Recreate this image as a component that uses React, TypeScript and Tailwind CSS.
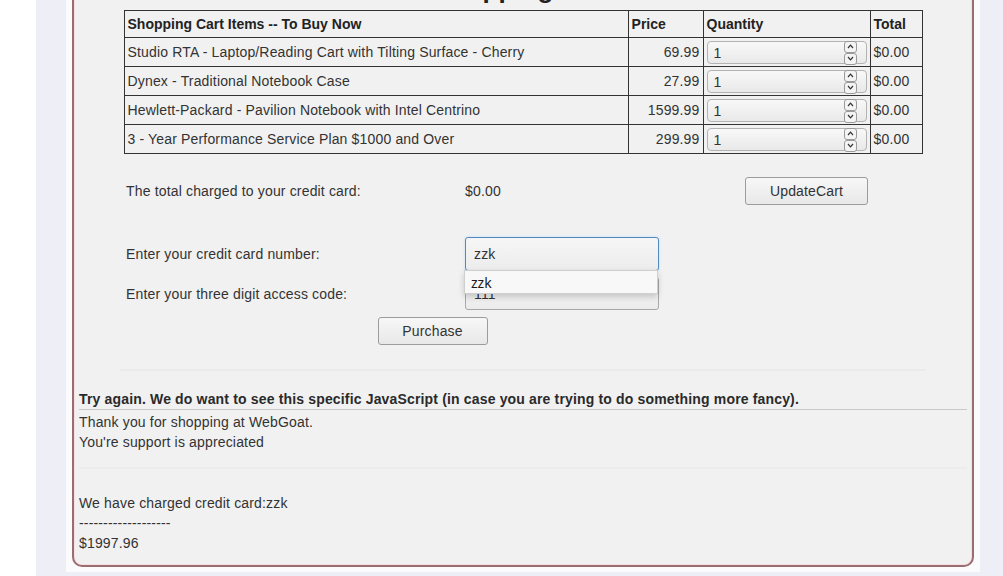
import React from 'react';

interface CartItem {
  name: string;
  price: string;
  qty: string;
  total: string;
}

const items: CartItem[] = [
  { name: 'Studio RTA - Laptop/Reading Cart with Tilting Surface - Cherry', price: '69.99', qty: '1', total: '$0.00' },
  { name: 'Dynex - Traditional Notebook Case', price: '27.99', qty: '1', total: '$0.00' },
  { name: 'Hewlett-Packard - Pavilion Notebook with Intel Centrino', price: '1599.99', qty: '1', total: '$0.00' },
  { name: '3 - Year Performance Service Plan $1000 and Over', price: '299.99', qty: '1', total: '$0.00' },
];

// spinner of a number field, drawn by hand
function QtyInput({ value }: { value: string }) {
  return (
    <div className="relative h-[23px] w-[160px] rounded-[4px] border border-[#b3b3b3] bg-gradient-to-b from-[#f8f8f8] to-[#e9e9e9] pl-[6px] leading-[22px]">
      {value}
      <div className="absolute right-[9px] top-[-1px] flex flex-col">
        <div className="flex h-[12px] w-[13px] items-center justify-center rounded-[3px] border border-[#9a9a9a] bg-[#f4f4f4]">
          <svg width="7" height="5" viewBox="0 0 7 5">
            <path d="M1 4 L3.5 1.2 L6 4" fill="none" stroke="#333" strokeWidth="1.2" />
          </svg>
        </div>
        <div className="flex h-[12px] w-[13px] items-center justify-center rounded-[3px] border border-[#9a9a9a] bg-[#f4f4f4]">
          <svg width="7" height="5" viewBox="0 0 7 5">
            <path d="M1 1 L3.5 3.8 L6 1" fill="none" stroke="#333" strokeWidth="1.2" />
          </svg>
        </div>
      </div>
    </div>
  );
}

function Button({ label, className }: { label: string; className: string }) {
  return (
    <button
      className={`h-[28px] rounded-[3px] border border-[#9c9c9c] bg-gradient-to-b from-[#f7f7f7] to-[#e8e8e8] text-[14px] tracking-[0.15px] text-[#333] ${className}`}
    >
      {label}
    </button>
  );
}

export default function App() {
  return (
    <div
      className="flex h-[576px] w-full overflow-hidden bg-white text-[14px] tracking-[0.16px] text-[#333]"
      style={{ fontFamily: '"Liberation Sans", Arial, sans-serif' }}
    >
      <div className="w-[36px] shrink-0 bg-white" />
      <div className="flex-1 bg-[#eeeef6] pl-[30px]">
        <div className="h-[572px] w-[914px] bg-[#fbfbfd] px-[6px] pb-[5px]">
          <div className="flex h-full flex-col rounded-b-[10px] border-x-2 border-b-2 border-[#9a6e6e] bg-[#f1f1f1] shadow-[inset_1px_0_0_#f5dfe5,inset_-1px_0_0_#f5dfe5,inset_0_-1px_0_#f5dfe5]">
            {/* Title (scrolled off) */}
            <div className="flex h-[4px] items-end justify-center overflow-hidden">
              <h2 className="text-[26px] font-bold leading-[30px] tracking-normal text-[#222]">Shopping Cart</h2>
            </div>

            {/* Cart table */}
            <table className="mx-auto mt-[6px] w-[799px] border-collapse border border-[#333]">
              <thead>
                <tr className="h-[27px] font-bold tracking-normal text-[#222]">
                  <th className="w-[505px] border border-[#333] px-[3px] text-left">Shopping Cart Items -- To Buy Now</th>
                  <th className="w-[75px] border border-[#333] px-[3px] text-left">Price</th>
                  <th className="w-[167px] border border-[#333] px-[3px] text-left">Quantity</th>
                  <th className="w-[52px] border border-[#333] px-[3px] text-left">Total</th>
                </tr>
              </thead>
              <tbody>
                {items.map((item) => (
                  <tr key={item.name} className="h-[29px]">
                    <td className="border border-[#333] px-[3px] pt-[1px]">{item.name}</td>
                    <td className="border border-[#333] px-[3px] pt-[1px] text-right">{item.price}</td>
                    <td className="border border-[#333] pl-[3px]">
                      <QtyInput value={item.qty} />
                    </td>
                    <td className="border border-[#333] px-[3px] pt-[1px]">{item.total}</td>
                  </tr>
                ))}
              </tbody>
            </table>

            {/* Payment form */}
            <div className="ml-[49px] mt-[23px] grid w-[799px] grid-cols-[339px_280px_1fr]">
              <div className="flex h-[28px] items-center pl-[3px] pt-[1px]">The total charged to your credit card:</div>
              <div className="flex h-[28px] items-center pl-[3px] pt-[1px]">$0.00</div>
              <div className="pl-[3px]">
                <Button label="UpdateCart" className="w-[123px]" />
              </div>

              <div className="mt-[32px] flex h-[34px] items-center pl-[3px] pt-[1px]">Enter your credit card number:</div>
              <div className="relative z-10 mt-[32px] pl-[3px]">
                <div className="flex h-[34px] w-[194px] items-center rounded-[3px] border border-[#5289bd] bg-gradient-to-b from-[#f6f6f6] to-[#ececec] pl-[8px] pt-[1px] shadow-[0_0_2px_1px_#dbe8f5]">
                  zzk
                </div>
                <div
                  className="absolute left-[2px] top-[33px] flex h-[24px] w-[194px] items-center border border-[#cfcfcf] bg-[#f8f8f8] pl-[6px] text-[14px] tracking-normal text-[#1a1a1a] shadow-[0_3px_6px_rgba(0,0,0,0.18)]"
                  style={{ fontFamily: '"Noto Sans", "DejaVu Sans", sans-serif' }}
                >
                  zzk
                </div>
              </div>
              <div />

              <div className="mt-[6px] flex h-[33px] items-center pl-[3px] pt-[1px]">Enter your three digit access code:</div>
              <div className="mt-[6px] pl-[3px]">
                <div className="flex h-[33px] w-[194px] items-center rounded-[3px] border border-[#a8a8a8] bg-gradient-to-b from-[#f6f6f6] to-[#ececec] pl-[8px] pt-[2px]">
                  111
                </div>
              </div>
              <div />

              <div className="col-span-2 mt-[7px] flex justify-center">
                <Button label="Purchase" className="w-[110px]" />
              </div>
            </div>

            <div className="mx-[46px] mt-[24px] h-[2px] bg-[#ebebeb]" />

            {/* Result messages */}
            <div className="mt-[17px] px-[5px]">
              <div className="border-b border-[#c9c9c9] pt-[1px] font-bold leading-[20px] text-[#2a2a2a]">
                Try again. We do want to see this specific JavaScript (in case you are trying to do something more fancy).
              </div>
              <div className="mt-[2px] leading-[20px]">Thank you for shopping at WebGoat.</div>
              <div className="leading-[20px]">You're support is appreciated</div>
              <div className="mt-[15px] h-[2px] bg-[#ececec]" />
              <div className="mt-[24px] leading-[20px]">We have charged credit card:zzk</div>
              <div className="leading-[20px]">-------------------</div>
              <div className="leading-[20px]">$1997.96</div>
            </div>
          </div>
        </div>
      </div>
    </div>
  );
}
